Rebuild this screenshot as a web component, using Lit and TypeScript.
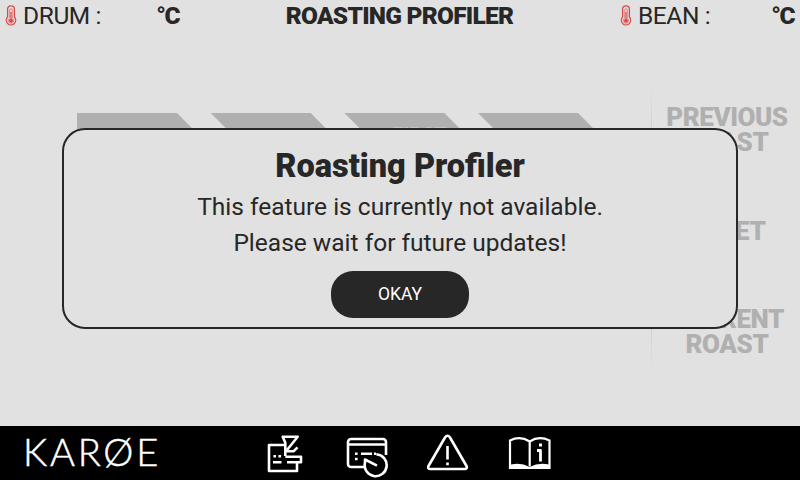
import { LitElement, html, css, svg } from "lit";
import { customElement, property } from "lit/decorators.js";

@customElement("temp-readout")
class TempReadout extends LitElement {
  @property() label = "";
  static styles = css`
    :host { display: flex; align-items: flex-start; height: 32px; line-height: 32px; font-size: 24.5px; width: 174px; box-sizing: border-box; }
    svg { width: 12px; height: 22px; margin-top: 5px; flex: none; }
    .label { margin-left: 6px; letter-spacing: -0.4px; white-space: pre; }
    .unit { margin-left: auto; font-weight: 900; letter-spacing: -1.5px; }
  `;
  render() {
    return html`
      <svg viewBox="0 0 12 22" fill="none" stroke="#dc4848">
        <path d="M2.6 12V4.2a3.4 3.4 0 0 1 6.8 0V12a4.7 4.7 0 1 1-6.8 0Z" stroke-width="1.3" />
        <path d="M4.7 13V5a1.3 1.3 0 0 1 2.6 0v8a2.8 2.8 0 1 1-2.6 0Z" stroke-width=".6" />
        <path d="M6 7v8" stroke-width="1.2" />
        <circle cx="6" cy="15.8" r="2" fill="#dc4848" stroke="none" />
      </svg>
      <span class="label">${this.label} :</span><span class="unit">°C</span>
    `;
  }
}

const icons = [
  svg`<path d="M19.5 11H4v26h28V29" /><path d="M20.300 22V8.700L17.700 2.700h15L22 16M21 17.300h7.500l4-4M20.300 22.700H36v5.600H22" /><path d="M8.400 22.300H11M13.400 22.300H16M8 28.300h8.500" />`,
  svg`<path d="M18.700 33H5a3 3 0 0 1-3-3V8a3 3 0 0 1 3-3h32a3 3 0 0 1 3 3v13M2 10.500h38" /><path d="M9 19.700h2.600M9 25h2.600M15 19.700h11M28 19.700h2" /><path d="M30.300 20.200A11 11 0 1 1 19 28.500v-3l12 6.200" />`,
  svg`<path d="M18 3.500 1.500 32q-1.200 3 2 3h34q3.200 0 2-3L23 3.500q-2.500-3.500-5 0Z" /><path d="M20.500 12v13.500M20.500 28.500v2.800" />`,
  svg`<path d="M21.700 7.500Q12 1.500 2 6.500V34h39.500V6.500Q31 1.500 21.700 7.500v25" stroke-width="2.200" stroke-linejoin="miter" /><path d="M3 30.500q10-2.500 18.500 2.500Q31 28 41 30.500V34H3Z" fill="#fff" stroke="none" /><path d="M31 11h3M29 16.500h3.500v11" stroke-width="2.800" />`,
];

@customElement("app-root")
class AppRoot extends LitElement {
  static styles = css`
    :host { display: flex; flex-direction: column; position: relative; width: 800px; height: 480px; overflow: hidden; background: #e1e1e1; color: #272727; font-family: Roboto, "Liberation Sans", sans-serif; }
    header { display: flex; justify-content: space-between; height: 32px; padding: 0 6px 0 5px; }
    header h1 { margin: 0; font-size: 24.5px; line-height: 32px; font-weight: 900; letter-spacing: -0.75px; white-space: nowrap; }
    main { flex: 1; display: flex; }
    .stages { display: flex; gap: 1px; padding: 81px 0 0 77px; box-sizing: border-box; width: 651px; }
    .stage { width: 132.700px; height: 33px; background: #b0b0b0; clip-path: polygon(0 0, 100px 0, 132.700px 33px, 33px 33px); color: #c4c4c4; font-weight: 800; font-size: 20px; line-height: 45px; text-align: center; text-indent: 18px; flex: none; }
    .stage:first-child { clip-path: polygon(0 0, 100px 0, 132.700px 33px, 0 33px); }
    .rule { width: 1px; height: 286px; margin-top: 54px; background: linear-gradient(transparent, #a8a8a8 50%, transparent); }
    .history { flex: 1; display: flex; flex-direction: column; align-items: center; padding: 72.500px 0 0 2px; color: #b0b0b0; font-size: 26px; line-height: 25px; font-weight: 900; letter-spacing: -0.45px; text-align: center; }
    .history div:nth-child(2) { margin: 64px 0 63px; }
    .dialog { position: absolute; left: 62px; top: 128px; width: 676px; height: 201px; box-sizing: border-box; border: 2px solid #272727; border-radius: 23px; background: #e1e1e1; display: flex; flex-direction: column; align-items: center; padding-top: 16px; }
    .dialog h2 { margin: 0 0 3px; font-size: 32.500px; line-height: 40px; font-weight: 900; letter-spacing: 0; }
    .dialog p { margin: 0; font-size: 24.500px; line-height: 36px; white-space: nowrap; }
    button { width: 138px; height: 47px; margin-top: 10px; border: 0; border-radius: 22px; background: #272727; color: #fff; font: 17.500px Roboto, sans-serif; padding: 0 0 2px; }
    footer { display: flex; height: 54px; background: #000; color: #fff; }
    .brand { width: 239px; padding-left: 23px; font: 300 38px/51px Lato, sans-serif; letter-spacing: 2.800px; -webkit-text-stroke: 0.5px #fff; }
    nav { display: flex; gap: 37px; padding-top: 8px; margin-left: 3px; }
    nav svg { width: 44px; height: 44px; fill: none; stroke: #fff; stroke-width: 2.600px; stroke-linejoin: round; }
  `;
  render() {
    return html`
      <header><temp-readout label="DRUM"></temp-readout><h1>ROASTING PROFILER</h1><temp-readout label="BEAN"></temp-readout></header>
      <main>
        <div class="stages">${["", "", "FIRST", ""].map((s) => html`<div class="stage">${s}</div>`)}</div>
        <div class="rule"></div>
        <div class="history"><div>PREVIOUS<br />ROAST</div><div>RESET</div><div>CURRENT<br />ROAST</div></div>
      </main>
      <footer><div class="brand">KARØE</div><nav>${icons.map((i) => html`<svg viewBox="0 0 44 44">${i}</svg>`)}</nav></footer>
      <section class="dialog" role="dialog">
        <h2>Roasting Profiler</h2>
        <p>This feature is currently not available.</p>
        <p>Please wait for future updates!</p>
        <button>OKAY</button>
      </section>
    `;
  }
}
